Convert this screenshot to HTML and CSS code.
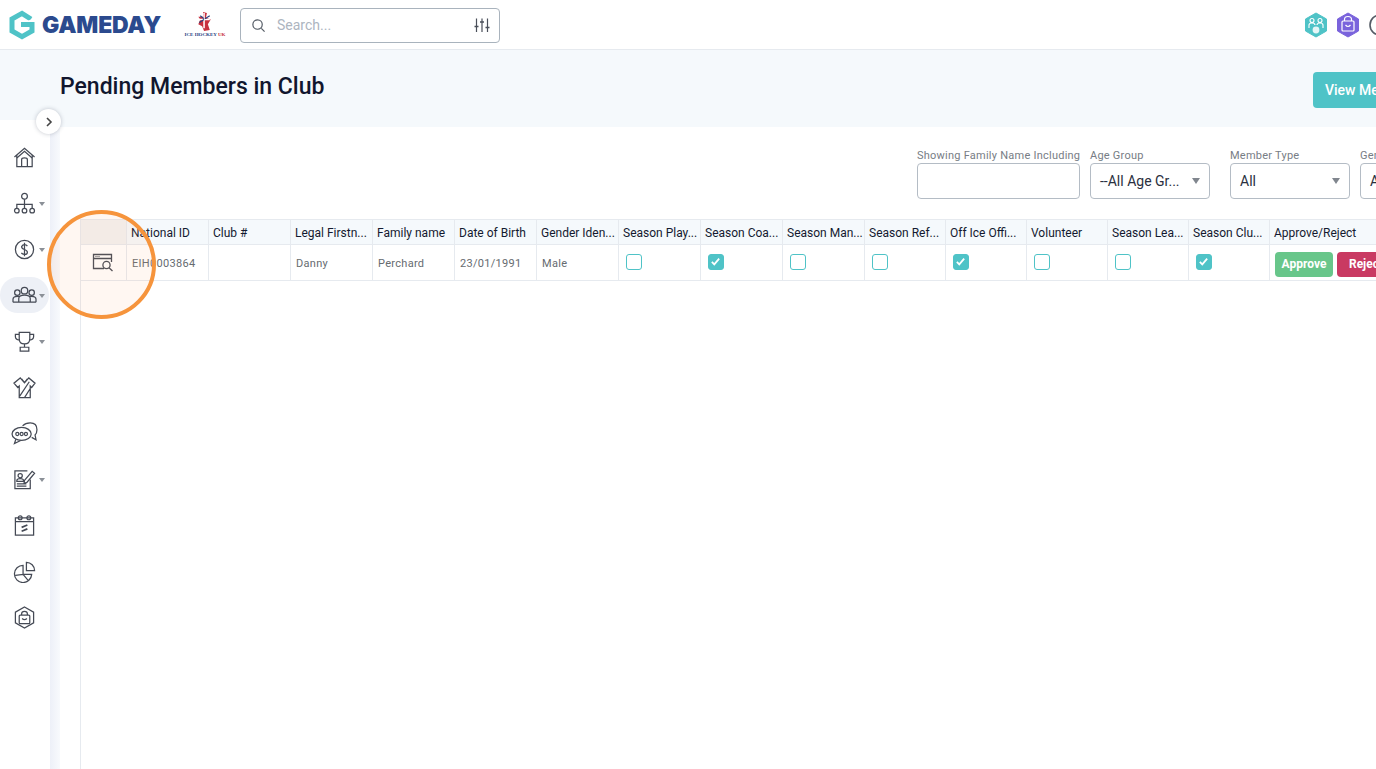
FILE: index.html
```html
<!DOCTYPE html>
<html lang="en">
<head>
    <meta charset="UTF-8">
    <title>Pending Members in Club</title>
    <link rel="stylesheet" href="styles.css">
</head>
<body>
    <header class="topbar">
        <div class="brand">
            <svg class="brand-mark" viewBox="0 0 26 30" width="26" height="30">
                <path d="M22 9.2 L13 3.4 L3 9 V21 L13 26.6 L23 21 V14.5 H12" fill="none" stroke="#4fc3c7" stroke-width="5"/>
                <path d="M23 9 L26 7 V12 H16 Z" fill="#ffffff"/>
            </svg>
            <span class="brand-name">GAMEDAY</span>
        </div>
        <div class="crest">
            <svg viewBox="0 0 20 22" width="20" height="21">
                <path d="M8 1 L12 2 L11 7 L16 9 L13 14 L15 20 L9 21 L7 16 L3 14 L5 9 L3 6 L8 6 Z" fill="#c8303f"/>
                <path d="M3 9 L15 9 M9 2 L9 18" stroke="#ffffff" stroke-width="1.6"/>
                <path d="M4 12 L9 9 M10 8 L15 5 M5 5 L9 8" stroke="#27407f" stroke-width="1.2"/>
            </svg>
            <span class="crest-name">ICE HOCKEY <b>UK</b></span>
        </div>
        <div class="search">
            <svg viewBox="0 0 16 16" width="15" height="15" class="search-icon">
                <circle cx="7" cy="7" r="5" fill="none" stroke="#555c66" stroke-width="1.3"/>
                <path d="M11 11 L14.5 14.5" stroke="#555c66" stroke-width="1.3"/>
            </svg>
            <span class="search-text">Search...</span>
            <svg viewBox="0 0 16 16" width="16" height="16" class="search-opts">
                <path d="M2.5 1.5V15M8 1.5V15M13.5 1.5V15" stroke="#4a4f5a" stroke-width="1.2"/>
                <path d="M.5 9.5H4.5M6 5H10M11.5 10.5H15.5" stroke="#4a4f5a" stroke-width="1.6"/>
            </svg>
        </div>
        <div class="top-icons">
            <svg viewBox="0 0 24 26" width="24" height="26">
                <path d="M12 1 L22.5 7 V19 L12 25 L1.5 19 V7 Z" fill="#4fc3c7" stroke="#4fc3c7" stroke-linejoin="round"/>
                <g fill="none" stroke="#fff" stroke-width="1.1">
                    <circle cx="8" cy="8.5" r="2"/><circle cx="16" cy="8.5" r="2"/>
                    <path d="M5 16V13Q5 11 8 11T11 13M13 13Q13 11 16 11T19 13V16"/>
                </g>
                <circle cx="12" cy="18" r="3.4" fill="#fff" opacity=".85"/>
            </svg>
            <svg viewBox="0 0 24 26" width="24" height="26">
                <path d="M12 1 L22.5 7 V19 L12 25 L1.5 19 V7 Z" fill="#7a63dc" stroke="#7a63dc" stroke-linejoin="round"/>
                <g fill="none" stroke="#fff" stroke-width="1.2">
                    <rect x="6" y="9" width="12" height="10" rx="1"/>
                    <path d="M8.5 9V7.5Q8.5 4.5 12 4.5T15.5 7.5V9M9.5 13Q12 16 14.5 13"/>
                </g>
            </svg>
            <svg viewBox="0 0 24 24" width="24" height="24">
                <circle cx="12" cy="12" r="10" fill="none" stroke="#555c66" stroke-width="1.6"/>
            </svg>
        </div>
    </header>

    <div class="layout">
        <aside class="sidebar">
            <button class="toggle">
                <svg viewBox="0 0 10 10" width="10" height="10"><path d="M3 1 L7 5 L3 9" fill="none" stroke="#444" stroke-width="1.6"/></svg>
            </button>
            <nav class="nav">
                <div class="nav-item">
                    <svg class="icon" viewBox="0 0 24 24"><path d="M1.5 11.5 L12 2.5 L22.5 11.5 M4 9.5V21.5H20V9.5M9 21.5V14Q9 12.5 12 12.5T15 14V21.5"/><path d="M4 12.5 L12 5.5 L20 12.5"/></svg>
                </div>
                <div class="nav-item has-menu">
                    <svg class="icon" viewBox="0 0 24 24"><circle cx="12" cy="4.5" r="3"/><path d="M12 7.5V13M4 17V13H20V17M12 13V17"/><circle cx="4" cy="19.5" r="2.4"/><circle cx="12" cy="19.5" r="2.4"/><circle cx="20" cy="19.5" r="2.4"/></svg>
                </div>
                <div class="nav-item has-menu">
                    <svg class="icon" viewBox="0 0 24 24"><circle cx="12" cy="12" r="9.5"/><path d="M15 8.5Q14 7 12 7T9 9Q9 11 12 12T15 15Q15 17 12 17T9 15.5M12 5V19"/></svg>
                </div>
                <div class="nav-item has-menu is-active">
                    <svg class="icon icon-wide" viewBox="0 0 26 24"><circle cx="13" cy="7" r="3.4"/><circle cx="5.5" cy="9" r="2.8"/><circle cx="20.5" cy="9" r="2.8"/><path d="M7 19V15Q7 11.5 13 11.5T19 15V19M7 19H19M1 19V16Q1 12.8 5.5 12.8Q7 12.8 8 13.4M25 19V16Q25 12.8 20.5 12.8Q19 12.8 18 13.4M1 19H7M19 19H25"/></svg>
                </div>
                <div class="nav-item has-menu">
                    <svg class="icon" viewBox="0 0 24 24"><path d="M6.5 2.5H17.5V9Q17.5 14.5 12 14.5T6.5 9ZM6.5 4.5H2.5V7Q2.5 10 6.8 10.5M17.5 4.5H21.5V7Q21.5 10 17.2 10.5M12 14.5V18M7.5 18H16.5V22H7.5Z"/></svg>
                </div>
                <div class="nav-item">
                    <svg class="icon" viewBox="0 0 24 24"><path d="M7.5 2 L1 7.5 L5 12 L6.5 10.5V22.5H18V10.5L19.5 12L23 7.5L16.5 2L12 7ZM12 7L9 3M12 7L15 3M7 21L17 6M12 22.5L18 13"/></svg>
                </div>
                <div class="nav-item">
                    <svg class="icon icon-wide" viewBox="0 0 28 24"><path d="M12 4Q15 1 20 1Q27 1 27 8Q27 11.5 25 13.5L26 18.5L21.5 16"/><ellipse cx="11" cy="12.5" rx="10" ry="6.8"/><path d="M5 18L3.5 22.5L10 19.3"/><circle cx="6.5" cy="12.5" r="1.6"/><circle cx="11" cy="12.5" r="1.6"/><circle cx="15.5" cy="12.5" r="1.6"/></svg>
                </div>
                <div class="nav-item has-menu">
                    <svg class="icon" viewBox="0 0 24 24"><path d="M18 12V21.5H2V3H15"/><circle cx="7.5" cy="8" r="2.2"/><path d="M4 14V13Q4 11 7.5 11T11 13V14ZM4 16.5H14M4 19H14M12 13L20 3.5L22.5 5.5L14.5 15L11.5 16Z"/></svg>
                </div>
                <div class="nav-item">
                    <svg class="icon" viewBox="0 0 24 24"><path d="M2.5 4H21.5V22H2.5ZM2.5 8H21.5"/><circle cx="7.5" cy="4" r="2"/><circle cx="16.5" cy="4" r="2"/><path d="M9 14L15 11.5M9 18L15 15.5" stroke-width="1.8"/></svg>
                </div>
                <div class="nav-item">
                    <svg class="icon" viewBox="0 0 24 24"><path d="M10.5 5.5A9 9 0 1 0 19.5 15H10.5ZM2.5 16L10.5 15L16 21.5"/><path d="M14 2.5A8.5 8.5 0 0 1 22.5 11H14Z"/></svg>
                </div>
                <div class="nav-item">
                    <svg class="icon" viewBox="0 0 24 24"><path d="M12 1 L21.5 6.5 V17.5 L12 23 L2.5 17.5 V6.5 Z"/><rect x="6.5" y="9.5" width="11" height="9" rx="1"/><path d="M9 9.5V8Q9 5.5 12 5.5T15 8V9.5M9.5 13Q12 15.5 14.5 13"/></svg>
                </div>
            </nav>
        </aside>

        <main class="main">
            <div class="page-head">
                <h1>Pending Members in Club</h1>
                <div class="head-actions"><a class="btn-view">View Members</a></div>
            </div>
            <div class="content">
                <div class="filters">
                    <div class="field field-name">
                        <label>Showing Family Name Including</label>
                        <div class="box"></div>
                    </div>
                    <div class="field field-select">
                        <label>Age Group</label>
                        <div class="box"><span>--All Age Gr...</span><i class="caret"></i></div>
                    </div>
                    <div class="field field-select">
                        <label>Member Type</label>
                        <div class="box"><span>All</span><i class="caret"></i></div>
                    </div>
                    <div class="field field-select">
                        <label>Gender</label>
                        <div class="box"><span>All</span><i class="caret"></i></div>
                    </div>
                </div>

                <div class="table-wrap">
                    <table class="members">
                        <colgroup>
                            <col class="c-view"><col class="c-82"><col class="c-82"><col class="c-82"><col class="c-82"><col class="c-82"><col class="c-82"><col class="c-82"><col class="c-82"><col class="c-82">
                            <col class="c-81"><col class="c-81"><col class="c-81"><col class="c-81"><col class="c-81"><col class="c-last">
                        </colgroup>
                        <thead>
                            <tr>
                                <th></th><th>National ID</th><th>Club #</th><th>Legal Firstn...</th><th>Family name</th><th>Date of Birth</th><th>Gender Iden...</th><th>Season Play...</th><th>Season Coa...</th><th>Season Man...</th><th>Season Ref...</th><th>Off Ice Offi...</th><th>Volunteer</th><th>Season Lea...</th><th>Season Clu...</th><th>Approve/Reject</th>
                            </tr>
                        </thead>
                        <tbody>
                            <tr>
                                <td class="view-cell">
                                    <svg viewBox="0 0 22 20" width="22" height="20"><g fill="none" stroke="#454a55" stroke-width="1.3"><path d="M12 15.5H1.5V1.5H19.5V9M1.5 5.5H19.5"/><circle cx="14.5" cy="12" r="3.6"/><path d="M17 14.8L20.5 18"/></g><path d="M3.5 3.5H8" stroke="#454a55" stroke-dasharray="1 1"/></svg>
                                </td>
                                <td>EIH0003864</td>
                                <td></td>
                                <td>Danny</td>
                                <td>Perchard</td>
                                <td>23/01/1991</td>
                                <td>Male</td>
                                <td><span class="check"></span></td>
                                <td><span class="check on"><svg viewBox="0 0 16 16"><path d="M3.5 8.5L6.5 11.5L12.5 4.5" fill="none" stroke="#fff" stroke-width="2.2"/></svg></span></td>
                                <td><span class="check"></span></td>
                                <td><span class="check"></span></td>
                                <td><span class="check on"><svg viewBox="0 0 16 16"><path d="M3.5 8.5L6.5 11.5L12.5 4.5" fill="none" stroke="#fff" stroke-width="2.2"/></svg></span></td>
                                <td><span class="check"></span></td>
                                <td><span class="check"></span></td>
                                <td><span class="check on"><svg viewBox="0 0 16 16"><path d="M3.5 8.5L6.5 11.5L12.5 4.5" fill="none" stroke="#fff" stroke-width="2.2"/></svg></span></td>
                                <td class="actions"><div class="action-row"><a class="btn-approve">Approve</a><a class="btn-reject">Reject</a></div></td>
                            </tr>
                        </tbody>
                    </table>
                </div>
            </div>
        </main>
    </div>

    <div class="spotlight"></div>
</body>
</html>
```

FILE: styles.css
```css
/* Page */
html, body {
    height: 100%;
}

body {
    font-family: Roboto, "Liberation Sans", sans-serif;
    background: #ffffff;
    color: #141a30;
    margin: 0;
    overflow: hidden;
    display: flex;
    flex-direction: column;
}

/* Top bar */
.topbar {
    display: flex;
    align-items: center;
    height: 49px;
    flex: none;
    border-bottom: 1px solid #e6eaef;
    background: #ffffff;
    overflow: hidden;
}

.brand {
    display: flex;
    align-items: center;
    margin-left: 9px;
    width: 151px;
}

.brand-mark {
    flex: none;
}

.brand-name {
    font-family: Inter, sans-serif;
    font-weight: 900;
    font-size: 23px;
    color: #2b4a8e;
    margin-left: 7px;
    letter-spacing: -0.2px;
}

.crest {
    display: flex;
    flex-direction: column;
    align-items: center;
    width: 42px;
    margin-left: 24px;
}

.crest-name {
    font-family: "Liberation Serif", serif;
    font-size: 5px;
    font-weight: 700;
    line-height: 6px;
    white-space: nowrap;
    color: #27407f;
}

.crest-name b {
    color: #c8303f;
}

.search {
    display: flex;
    align-items: center;
    box-sizing: border-box;
    width: 260px;
    height: 35px;
    margin-left: 14px;
    margin-top: 1px;
    padding: 0 9px 0 10px;
    border: 1px solid #a9b3bd;
    border-radius: 4px;
}

.search-text {
    margin-left: 11px;
    flex: 1;
    font-size: 14px;
    color: #adb5bf;
}

.top-icons {
    display: flex;
    align-items: center;
    gap: 8px;
    margin-left: auto;
    margin-right: -16px;
}

/* Sidebar + main */
.layout {
    display: flex;
    flex: 1;
    min-height: 0;
}

.sidebar {
    position: relative;
    display: flex;
    flex-direction: column;
    width: 50px;
    flex: none;
    background: #f5f9fc;
}

.toggle {
    position: absolute;
    top: 59px;
    left: 36px;
    width: 25px;
    height: 25px;
    padding: 0;
    border: none;
    border-radius: 50%;
    background: #ffffff;
    box-shadow: 0 0 4px rgba(60, 70, 90, 0.3);
    display: flex;
    align-items: center;
    justify-content: center;
    z-index: 2;
}

.nav {
    flex: 1;
    margin-top: 70px;
    padding-top: 14px;
    background: #ffffff;
}

.nav-item {
    position: relative;
    height: 46px;
    display: flex;
    align-items: center;
    padding-left: 13px;
}

.nav-item.has-menu::after {
    content: '';
    position: absolute;
    left: 39px;
    top: 22px;
    border: 3px solid transparent;
    border-top: 4px solid #8b9097;
    border-bottom: none;
}

.nav-item.is-active::before {
    content: '';
    position: absolute;
    left: 0;
    top: 5px;
    width: 49px;
    height: 36px;
    border-radius: 18px;
    background: #edf0f6;
}

.icon {
    position: relative;
    width: 23px;
    height: 23px;
    fill: none;
    stroke: #454a55;
    stroke-width: 1.3;
}

.icon-wide {
    width: 27px;
    margin-left: -2px;
}

.main {
    flex: 1;
    min-width: 0;
    display: flex;
    flex-direction: column;
    overflow: hidden;
    background: linear-gradient(90deg, #edf0f8, #f8fafd) no-repeat left / 10px 100%, #ffffff;
}

.page-head {
    display: flex;
    align-items: center;
    flex: none;
    height: 77px;
    background: #f5f9fc;
    padding-left: 10px;
}

h1 {
    margin: 0 0 4px;
    font-size: 23px;
    font-weight: 500;
    color: #11162e;
}

.head-actions {
    margin-left: auto;
    width: 63px;
}

.btn-view {
    display: block;
    width: 120px;
    height: 36px;
    margin-top: 2px;
    box-sizing: border-box;
    padding-left: 12px;
    line-height: 36px;
    font-size: 14px;
    font-weight: 500;
    color: #ffffff;
    white-space: nowrap;
    background: #4fc3c7;
    border-radius: 4px;
}

.content {
    flex: 1;
    min-height: 0;
    display: flex;
    flex-direction: column;
    padding: 22px 0 0 30px;
}

/* Filters */
.filters {
    display: flex;
    gap: 10px;
    flex: none;
    padding-left: 837px;
    margin-bottom: 20px;
}

.field {
    flex: none;
}

.field label {
    display: block;
    font-size: 11px;
    line-height: 14px;
    letter-spacing: 0.24px;
    color: #777d85;
    white-space: nowrap;
}

.field:nth-child(3) {
    margin-left: 10px;
}

.box {
    display: flex;
    align-items: center;
    justify-content: space-between;
    box-sizing: border-box;
    height: 36px;
    padding: 0 9px;
    border: 1px solid #b4bcc5;
    border-radius: 4px;
    font-size: 14px;
    color: #2a3040;
}

.field-name {
    width: 163px;
}

.field-select {
    width: 120px;
}

.caret {
    border: 4px solid transparent;
    border-top: 6px solid #80868e;
    border-bottom: none;
}

/* Table */
.table-wrap {
    flex: 1;
    border-left: 1px solid #e6eaef;
}

.members {
    table-layout: fixed;
    width: 1339px;
    border-collapse: separate;
    border-spacing: 0;
    border-top: 1px solid #e6eaef;
}

.c-view { width: 46px; }
.c-82 { width: 82px; }
.c-81 { width: 81px; }
.c-last { width: 150px; }

.members th {
    height: 23px;
    padding: 1px 4px 0;
    text-align: left;
    font-size: 12px;
    font-weight: 400;
    white-space: nowrap;
    overflow: hidden;
    color: #141a30;
    background: #f5f9fc;
    border-right: 1px solid #e6eaef;
    border-bottom: 1px solid #e6eaef;
}

.members th:first-child {
    background: #f2f2f2;
}

.members td {
    height: 34px;
    padding: 1px 5px 0;
    font-size: 11px;
    letter-spacing: 0.3px;
    color: #666b70;
    white-space: nowrap;
    overflow: hidden;
    border-right: 1px solid #e6eaef;
    border-bottom: 1px solid #e6eaef;
}

.members td.view-cell {
    padding: 0 0 0 11px;
}

.view-cell svg {
    display: block;
}

.check {
    display: block;
    box-sizing: border-box;
    width: 16px;
    height: 16px;
    margin: -3px 0 0 2px;
    border: 1.5px solid #4fc3c7;
    border-radius: 3px;
}

.check.on {
    background: #4fc3c7;
}

.check svg {
    display: block;
    width: 13px;
    height: 13px;
}

.members td.actions {
    height: 32px;
    padding: 3px 0 0 5px;
    overflow: hidden;
}

.action-row {
    display: flex;
    gap: 4px;
}

.actions a {
    flex: none;
    height: 25px;
    line-height: 25px;
    border-radius: 4px;
    font-size: 12px;
    font-weight: 700;
    letter-spacing: 0;
    color: #ffffff;
    text-align: center;
}

.btn-approve {
    width: 58px;
    background: #68c68a;
}

.btn-reject {
    width: 58px;
    background: #c93a62;
}

/* Orange highlight round the view icon */
.spotlight {
    position: absolute;
    left: 47px;
    top: 210px;
    width: 109px;
    height: 109px;
    box-sizing: border-box;
    border: 4px solid #f6943c;
    border-radius: 50%;
    background: rgba(250, 170, 110, 0.09);
}
```
